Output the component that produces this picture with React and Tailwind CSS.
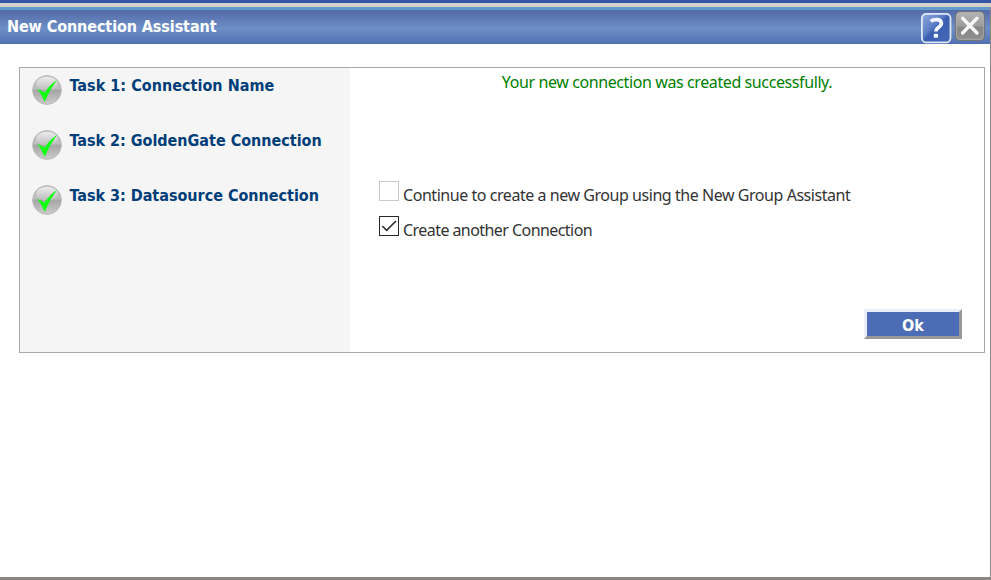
import React from "react";

function HelpIcon() {
  return (
    <svg width="31" height="31" viewBox="0 0 31 31">
      <defs>
        <linearGradient id="help" x1="0" y1="0" x2="1" y2="1">
          <stop offset="0" stopColor="#8fa9dc" />
          <stop offset="0.42" stopColor="#5b7cc4" />
          <stop offset="0.5" stopColor="#3c5eb0" />
          <stop offset="1" stopColor="#4668b8" />
        </linearGradient>
      </defs>
      <rect x="0.9" y="0.8" width="28.6" height="28.6" rx="4.5" fill="url(#help)" stroke="#dfe8f7" strokeWidth="1.8" />
      <path d="M9.8 8.4C12.5 5.9 20.4 5.5 20.4 10.4C20.4 14.4 14.9 14.2 14.9 18.4" fill="none" stroke="#f4f7ff" strokeWidth="3.8" />
      <rect x="12.7" y="20.8" width="4.4" height="4" rx="1" fill="#f4f7ff" />
    </svg>
  );
}

function CloseIcon() {
  return (
    <svg width="31" height="31" viewBox="0 0 31 31">
      <defs>
        <linearGradient id="close" x1="0" y1="0" x2="0" y2="1">
          <stop offset="0" stopColor="#b4b4b4" />
          <stop offset="0.5" stopColor="#9c9c9c" />
          <stop offset="0.55" stopColor="#858585" />
          <stop offset="1" stopColor="#929292" />
        </linearGradient>
      </defs>
      <rect x="0.6" y="0.6" width="28.8" height="28.8" rx="4.5" fill="url(#close)" stroke="#747474" strokeWidth="1.2" />
      <rect x="1.6" y="1.6" width="26.8" height="26.8" rx="3.5" fill="none" stroke="#b5b5b5" strokeWidth="0.7" />
      <path d="M7.6 7.2L22 22M22 7.2L7.6 22" stroke="#f7f7f7" strokeWidth="3.4" strokeLinecap="round" />
    </svg>
  );
}

function DoneIcon() {
  return (
    <svg className="shrink-0" width="30" height="30" viewBox="0 0 30 30">
      <defs>
        <linearGradient id="ball" x1="0" y1="0" x2="0" y2="1">
          <stop offset="0" stopColor="#c2c2c2" />
          <stop offset="0.45" stopColor="#bdbdbd" />
          <stop offset="0.52" stopColor="#a6a6a6" />
          <stop offset="1" stopColor="#cccccc" />
        </linearGradient>
        <linearGradient id="shine" x1="0" y1="0" x2="0" y2="1">
          <stop offset="0" stopColor="#ececec" />
          <stop offset="1" stopColor="#bcbcbc" />
        </linearGradient>
      </defs>
      <circle cx="15" cy="15" r="14.4" fill="url(#ball)" stroke="#b8b8b8" strokeWidth="0.9" />
      <ellipse cx="15" cy="8.6" rx="10.8" ry="6.8" fill="url(#shine)" />
      <path d="M5 13.6L12.6 17.4Q18 9.5 25.2 4.8Q18.6 13.6 12.6 27Q10.4 20.5 5 13.6Z" fill="#11ff11" />
    </svg>
  );
}

function Task({ children }) {
  return (
    <div className="flex h-[55px] items-start">
      <DoneIcon />
      {children}
    </div>
  );
}

const taskText =
  "mt-px ml-[7.5px] whitespace-nowrap font-['DejaVu_Sans_Condensed','DejaVu_Sans',sans-serif] text-[16px] leading-5 font-bold text-[#003d79] [font-stretch:condensed]";
const bodyText = "whitespace-nowrap font-['Noto_Sans',sans-serif] text-[16px] leading-5";

export default function App() {
  return (
    <div className="flex h-[580px] w-[991px] flex-col overflow-hidden bg-white">
      <div className="h-[3px] shrink-0 bg-[#3455a8]" />
      <div className="h-1 shrink-0 bg-[#d5d1ca]" />
      <div className="flex min-h-0 flex-1 flex-col border-r border-b-[3px] border-[#8a8885]">
        <div className="h-[3px] shrink-0 bg-[#659bca]" />
        <header className="flex h-[34px] shrink-0 items-start justify-between bg-linear-to-b from-[#536aa8] via-[#6d8fc6] via-55% to-[#5070b2] pl-[7px]">
          <h1 className="mt-[7px] font-['DejaVu_Sans_Condensed','DejaVu_Sans',sans-serif] text-[16px] leading-5 font-bold tracking-[-0.1px] whitespace-nowrap text-white [font-stretch:condensed]">
            New Connection Assistant
          </h1>
          <div className="mt-px mr-1 flex gap-[3px]">
            <div className="mt-[2px]"><HelpIcon /></div>
            <CloseIcon />
          </div>
        </header>
        <main className="mt-[23px] ml-[19px] flex h-[286px] w-[966px] border border-[#a8a8a8]">
          <aside className="w-[330px] shrink-0 bg-[#f5f5f5] pt-[7px] pl-3">
            <Task><span className={`${taskText} tracking-[0.03px]`}>Task 1: Connection Name</span></Task>
            <Task><span className={`${taskText} tracking-[-0.02px]`}>Task 2: GoldenGate Connection</span></Task>
            <Task><span className={`${taskText} tracking-[-0.02px]`}>Task 3: Datasource Connection</span></Task>
          </aside>
          <section className="flex flex-1 flex-col">
            <p className={`${bodyText} mt-[4px] text-center tracking-[-0.4px] text-[#008000]`}>Your new connection was created successfully.</p>
            <label className="mt-[89px] ml-[29px] flex h-[35px] items-start">
              <span className="h-5 w-5 border border-[#c9c9c9]" />
              <span className={`${bodyText} mt-[4px] ml-1 tracking-[-0.45px] text-[#333333]`}>Continue to create a new Group using the New Group Assistant</span>
            </label>
            <label className="ml-[29px] flex h-[35px] items-start">
              <span className="flex h-5 w-5 border border-[#292929]">
                <svg width="18" height="18" viewBox="0 0 18 18" fill="none">
                  <path d="M2.3 9L6.6 13.3L16 4" stroke="#303030" strokeWidth="1.6" />
                </svg>
              </span>
              <span className={`${bodyText} mt-[4px] ml-1 tracking-[-0.56px] text-[#333333]`}>Create another Connection</span>
            </label>
            <button className="mt-[58px] mr-[22px] h-[30px] w-[98px] self-end border-[3px] border-t-[#e9eef9] border-r-[#989898] border-b-[#989898] border-l-[#e9eef9] bg-[#4c6db6] pt-[3px] font-['DejaVu_Sans_Condensed','DejaVu_Sans',sans-serif] text-[16px] leading-[21px] font-bold text-white [font-stretch:condensed]">
              Ok
            </button>
          </section>
        </main>
      </div>
    </div>
  );
}
